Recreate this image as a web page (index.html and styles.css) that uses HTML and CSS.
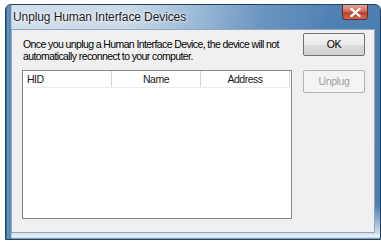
FILE: index.html
```html
<!DOCTYPE html>
<html>
<head>
<meta charset="utf-8">
<link rel="stylesheet" href="styles.css">
</head>
<body>
<div class="window">
  <div class="titlebar">
    <span class="title">Unplug Human Interface Devices</span>
    <span class="close"><svg width="11" height="9" viewBox="0 0 11 9"><path d="M1.5 1 L9.5 8 M9.5 1 L1.5 8" stroke="#fff" stroke-width="2.2" stroke-linecap="square"/></svg></span>
  </div>
  <div class="client">
    <div class="main">
      <p class="msg">Once you unplug a Human Interface Device, the device will not<br>automatically reconnect to your computer.</p>
      <div class="list">
        <div class="hdr">
          <div class="col left">HID</div>
          <div class="col">Name</div>
          <div class="col">Address</div>
          <div class="col rest"></div>
        </div>
      </div>
    </div>
    <div class="side">
      <div class="btn">OK</div>
      <div class="btn disabled">Unplug</div>
    </div>
  </div>
</div>
</body>
</html>
```
FILE: styles.css
```css
html, body {
  margin: 0;
  padding: 0;
  background: #ffffff;
}
body {
  width: 381px;
  height: 242px;
  overflow: hidden;
  font-family: "Liberation Sans", Arial, sans-serif;
}
.window {
  box-sizing: border-box;
  margin: 4px 0 0 5px;
  width: 376px;
  height: 236px;
  border: 1px solid #24425f;
  border-radius: 6px 6px 0 0;
  background:
    linear-gradient(90deg, #2c5f8f 0px, #6fa0cc 2px, #3f74a6 4px, rgba(0,0,0,0) 6px),
    linear-gradient(180deg, rgba(0,0,0,0) 200px, #cfe0ef 228px, #eef4f9 232px, #5d86ad 234px),
    linear-gradient(100deg, #d3e0ec 0%, #c8d9e9 30%, #97b6d4 48%, #6b95c0 62%, #4f80b2 80%, #4a7db0 100%);
  display: flex;
  flex-direction: column;
}
.titlebar {
  height: 23px;
  display: flex;
  justify-content: space-between;
  align-items: flex-start;
  padding-left: 7px;
}
.title {
  font-size: 12px;
  line-height: 14px;
  margin-top: 5px;
  color: #1b1b1b;
  letter-spacing: -0.1px;
  text-shadow: 0 0 4px rgba(255,255,255,0.9), 0 0 2px rgba(255,255,255,0.9);
}
.close {
  width: 26px;
  height: 15px;
  margin-right: 12px;
  box-sizing: border-box;
  border: 1px solid #6b2a22;
  border-top: none;
  border-radius: 0 0 4px 4px;
  background: linear-gradient(180deg, #e3a296 0%, #d2705f 45%, #b8412d 55%, #cf6a55 100%);
  display: flex;
  align-items: center;
  justify-content: center;
}
.close svg {
  display: block;
}
.client {
  flex: 1;
  margin: 1px 5px 6px 5px;
  background: #f0f0f0;
  border: 1px solid #8ea6bf;
  display: flex;
  gap: 11px;
  padding: 3px 0 0 10px;
}
.main {
  width: 270px;
  display: flex;
  flex-direction: column;
}
.msg {
  margin: 5px 0 0 1px;
  font-size: 10.5px;
  letter-spacing: -0.6px;
  word-spacing: 0;
  line-height: 12px;
  white-space: nowrap;
  color: #000;
}
.list {
  margin-top: 8px;
  height: 149px;
  box-sizing: border-box;
  border: 1px solid #828790;
  background: #fff;
}
.hdr {
  display: grid;
  grid-template-columns: 89px 89px 89px 1fr;
  height: 16px;
  border-bottom: 1px solid #ececec;
}
.col {
  font-size: 10.5px;
  letter-spacing: -0.5px;
  line-height: 16px;
  text-align: center;
  color: #1a1a1a;
  border-right: 1px solid #d5d5d5;
}
.col.left {
  text-align: left;
  padding-left: 4px;
}
.col.rest {
  border-right: none;
}
.side {
  display: flex;
  flex-direction: column;
  gap: 14px;
}
.btn {
  width: 62px;
  height: 23px;
  box-sizing: border-box;
  border: 1px solid #707070;
  border-radius: 2px;
  background: linear-gradient(180deg, #f4f4f4 0%, #ebebeb 50%, #dcdcdc 51%, #d0d0d0 100%);
  font-size: 10.5px;
  letter-spacing: -0.4px;
  line-height: 21px;
  text-align: center;
  color: #000;
}
.btn.disabled {
  background: #f4f4f4;
  border-color: #adb2b5;
  color: #a0a0a0;
}
```
